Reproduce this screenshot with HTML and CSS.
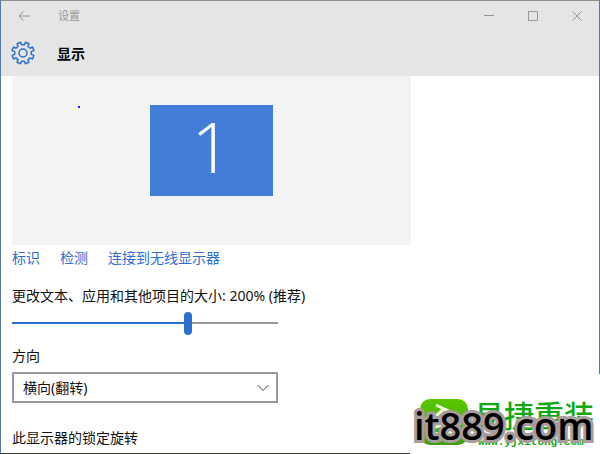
FILE: index.html
```html
<!DOCTYPE html>
<html lang="zh-CN">
<head>
<meta charset="utf-8">
<title>设置</title>
<link rel="stylesheet" href="styles.css">
</head>
<body>
<div class="window">
  <header class="head">
    <div class="titlebar">
      <button class="icon-btn" aria-label="返回"><svg width="12" height="10" viewBox="0 0 12 10"><path d="M12 5H1M5.500 .5L1 5l4.500 4.500"/></svg></button>
      <span class="app-name">设置</span>
      <div class="controls">
        <button class="icon-btn" aria-label="最小化"><svg width="10" height="10" viewBox="0 0 10 10"><path d="M0 4.500H10"/></svg></button>
        <button class="icon-btn" aria-label="最大化"><svg width="10" height="10" viewBox="0 0 10 10"><path d="M.5 .5h9v9h-9z"/></svg></button>
        <button class="icon-btn" aria-label="关闭"><svg width="10" height="10" viewBox="0 0 10 10"><path d="M.5 .5l9 9M9.500 .5l-9 9"/></svg></button>
      </div>
    </div>
    <div class="page-title">
      <svg class="gear" width="24" height="24" viewBox="0 0 24 24"><path d="M9.6 1.200L10.500 3.800H13.500L14.400 1.200L18 2.700L16.900 5.200L19 7.200L21.500 6L22.900 9.600L20.300 10.600V13.400L22.900 14.400L21.500 18L19 16.900L16.900 18.900L18 21.400L14.400 22.800L13.500 20.300H10.500L9.600 22.800L6 21.400L7.100 18.900L5 16.900L2.500 18L1.100 14.400L3.700 13.400V10.600L1.100 9.600L2.500 6L5 7.200L7.100 5.200L6 2.700Z"/><circle cx="12" cy="12" r="4"/></svg>
      <h1>显示</h1>
    </div>
  </header>
  <main class="content">
    <div class="preview">
      <span class="speck"></span>
      <div class="monitor">1</div>
    </div>
    <nav class="links"><a href="#">标识</a><a href="#">检测</a><a href="#">连接到无线显示器</a></nav>
    <label class="scale-label" for="scale">更改文本、应用和其他项目的大小: 200% (推荐)</label>
    <input class="slider" id="scale" type="range" min="0" max="3" step="1" value="2">
    <label class="field-label" for="direction">方向</label>
    <div class="select-wrap">
      <select id="direction"><option>横向(翻转)</option></select>
      <svg class="chevron" width="12" height="8" viewBox="0 0 12 8"><path d="M.5 1L6 6.500L11.500 1"/></svg>
    </div>
    <p class="lock">此显示器的锁定旋转</p>
  </main>
</div>
<aside class="watermark">
  <svg class="logo" width="48" height="46" viewBox="0 0 48 46">
    <defs><linearGradient id="g" x1="0" y1="0" x2="0" y2="1"><stop offset="0" stop-color="#58c800"/><stop offset="1" stop-color="#3f9d10"/></linearGradient></defs>
    <rect width="48" height="46" rx="10" fill="url(#g)"/>
    <path d="M16 6l8 4-8 7M24 10c8 2 10 8 16 16M10 28c7 3 13-7 26-2M15 35l18-2" fill="none" stroke="#efffdc" stroke-width="3"/>
  </svg>
  <div class="brand"><span class="brand-name">易捷重装</span><span class="brand-url">www.yjxitong.com</span></div>
  <span class="site">it889.com</span>
</aside>
</body>
</html>
```
FILE: styles.css
```css
* { box-sizing: border-box; }
body {
  margin: 0;
  background: #fff;
  color: #111;
  font: 14px/20px "Noto Sans", "Noto Sans CJK SC", sans-serif;
}
.window {
  min-height: 100vh;
  border: 1px solid #5577a8;
  border-top-color: #8c8c8c;
  border-bottom-color: #3c4038;
}
.head { background: #e5e5e5; height: 75px; }
.titlebar { display: flex; align-items: center; height: 29px; padding-left: 16px; }
.icon-btn {
  display: flex;
  align-items: center;
  justify-content: center;
  width: 14px;
  height: 28px;
  padding: 0;
  border: 0;
  background: none;
}
.icon-btn svg { fill: none; stroke: #949494; }
.app-name { margin-left: 27px; font-size: 11px; color: #999; }
.controls { display: flex; margin-left: auto; }
.controls .icon-btn { width: 44px; }
.page-title { display: flex; align-items: center; gap: 22px; height: 48px; padding: 0 0 0 10px; }
.gear { fill: none; stroke: #2c6fd1; stroke-width: 1.5; stroke-linejoin: round; margin-bottom: 2px; }
h1 { margin: 0; font-size: 14px; line-height: 20px; font-weight: 700; color: #000; }
.content { padding: 0 11px; }
.preview {
  position: relative;
  display: flex;
  justify-content: center;
  max-width: 399px;
  height: 169px;
  padding: 29px 0;
  background: #f3f3f3;
}
.speck { position: absolute; left: 66px; top: 30px; width: 2px; height: 2px; background: #2422e0; }
.monitor {
  width: 123px;
  height: 91px;
  background: #427dda;
  color: #fff;
  font-family: "Open Sans", sans-serif;
  font-size: 70px;
  font-weight: 300;
  line-height: 82px;
  text-align: center;
}
.links { display: flex; gap: 20px; margin-top: 3px; }
.links a { color: #2c6fd1; text-decoration: none; }
.scale-label { display: block; margin-top: 18px; }
.slider {
  display: block;
  -webkit-appearance: none;
  appearance: none;
  width: 266px;
  height: 24px;
  margin: 5px 0 0;
  background: linear-gradient(to right, #2c6fd1 66%, #999 66%) center / 100% 2px no-repeat;
}
.slider::-webkit-slider-thumb {
  -webkit-appearance: none;
  width: 8px;
  height: 23px;
  border-radius: 4px;
  background: #2c6fd1;
}
.field-label { display: block; margin-top: 11px; }
.select-wrap { position: relative; width: 266px; margin-top: 6px; }
.select-wrap select {
  display: block;
  width: 100%;
  height: 31px;
  padding: 0 9px;
  border: 2px solid #999;
  border-radius: 0;
  background: #fff;
  color: #111;
  font: inherit;
  appearance: none;
}
.chevron { position: absolute; right: 9px; top: 12px; fill: none; stroke: #444; pointer-events: none; }
.lock { margin: 25px 0 0; }
.watermark {
  position: absolute;
  right: 0;
  bottom: 0;
  display: flex;
  gap: 6px;
  width: 190px;
  height: 80px;
  padding: 25px 0 0 10px;
  background: #fff;
}
.logo { flex: none; }
.brand { display: flex; flex-direction: column; color: #12a812; white-space: nowrap; }
.brand-name { font-size: 30px; line-height: 34px; font-weight: 500; }
.brand-url { padding-left: 4px; font: 700 11px/18px "Liberation Mono", monospace; }
.site {
  position: absolute;
  left: 4px;
  top: 26px;
  font-family: "Open Sans", sans-serif;
  font-size: 38px;
  line-height: 50px;
  font-weight: 600;
  color: #000;
  -webkit-text-stroke: 6px #a89c9c;
  paint-order: stroke fill;
}
```
